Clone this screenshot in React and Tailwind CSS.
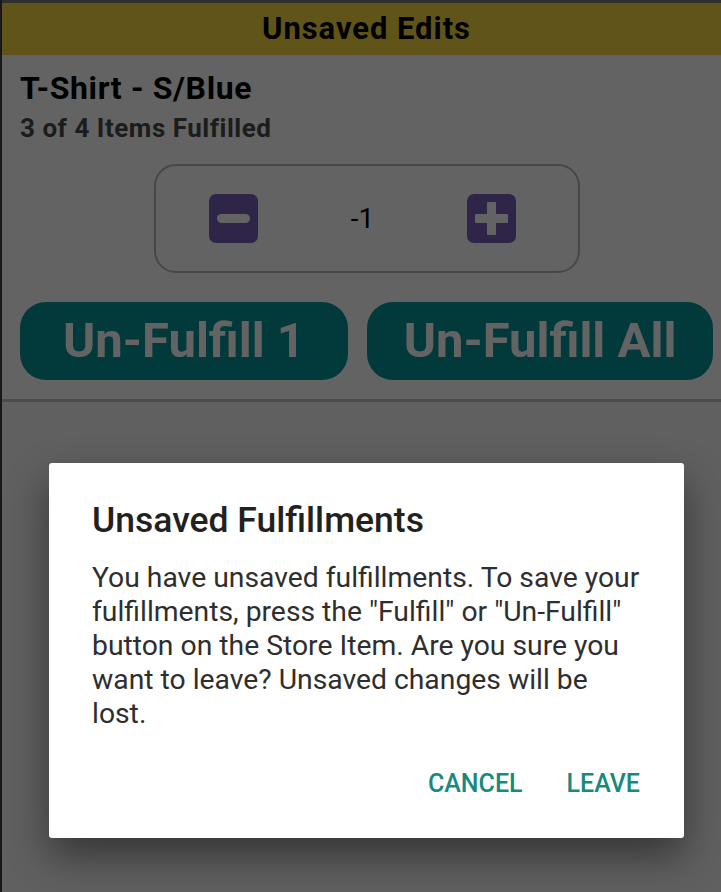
export default function App() {
  return (
    <div
      className="relative h-[892px] w-[721px] overflow-hidden bg-white"
      style={{ fontFamily: 'Roboto, "Noto Sans", sans-serif' }}
    >
      {/* page underneath (screen is a bit wider than the capture, right edge is cut) */}
      <div className="flex h-full w-[733px] flex-col">
        <div className="h-[3px] bg-[#7a7a7a]" />
        <header className="flex h-[52px] items-center justify-center bg-[#f8d840]">
          <h1 className="text-[31px] font-bold tracking-[0.03em] text-black">Unsaved Edits</h1>
        </header>
        <div className="px-5 pt-[15px]">
          <h2 className="text-[32px] font-bold leading-[36px] tracking-[0.02em] text-black">T-Shirt - S/Blue</h2>
          <p className="mt-[7px] text-[26px] font-bold leading-[30px] tracking-[0.02em] text-[#4a4a4a]">3 of 4 Items Fulfilled</p>
        </div>
        <div className="mt-[21px] flex justify-center">
          <div className="flex h-[109px] w-[426px] items-center justify-between rounded-[22px] border-2 border-[#b8b8b8] pl-[53px] pr-[61px]">
            <button className="flex h-[49px] w-[49px] items-center justify-center rounded-[7px] bg-[#765fbb]">
              <span className="block h-[9px] w-[33px] rounded-full bg-white" />
            </button>
            <span className="text-[28px] text-black">-1</span>
            <button className="relative flex h-[49px] w-[49px] items-center justify-center rounded-[7px] bg-[#765fbb]">
              <span className="absolute h-[9px] w-[33px] rounded-[1px] bg-white" />
              <span className="absolute h-[33px] w-[9px] rounded-[1px] bg-white" />
            </button>
          </div>
        </div>
        <div className="mt-[29px] flex gap-[19px] px-5">
          <button className="flex h-[78px] w-[328px] items-center justify-center rounded-[26px] bg-[#06959a] text-[49px] font-bold text-white">
            Un-Fulfill 1
          </button>
          <button className="flex h-[78px] flex-1 items-center justify-center rounded-[26px] bg-[#06959a] text-[49px] font-bold text-white">
            Un-Fulfill All
          </button>
        </div>
        <div className="mt-[19px] h-[3px] bg-[#c4c4c4]" />
        <div className="flex-1 bg-[#f6f6f6]" />
      </div>

      {/* scrim */}
      <div className="absolute inset-0 bg-black/[0.61]" />
      <div className="absolute inset-y-0 left-0 w-[2px] bg-[#16181d]" />

      {/* dialog */}
      <div className="absolute left-[49px] top-[463px] w-[635px] rounded-[3px] bg-white pb-[39px] pl-[43px] pr-[44px] pt-[37px] shadow-[0_18px_40px_rgba(0,0,0,0.45)]">
        <h3 className="text-[35.5px] font-medium leading-[40px] text-[#212121]">Unsaved Fulfillments</h3>
        <p className="mt-[21px] text-[28.3px] leading-[34px] text-[#2e2e2e]">
          You have unsaved fulfillments. To save your fulfillments, press the "Fulfill" or "Un-Fulfill" button on the Store Item. Are you sure you want to leave? Unsaved changes will be lost.
        </p>
        <div className="mt-[38px] flex justify-end gap-[44px]">
          <button className="text-[25px] font-medium leading-[30px] text-[#17897d]">CANCEL</button>
          <button className="text-[25px] font-medium leading-[30px] text-[#17897d]">LEAVE</button>
        </div>
      </div>
    </div>
  )
}
